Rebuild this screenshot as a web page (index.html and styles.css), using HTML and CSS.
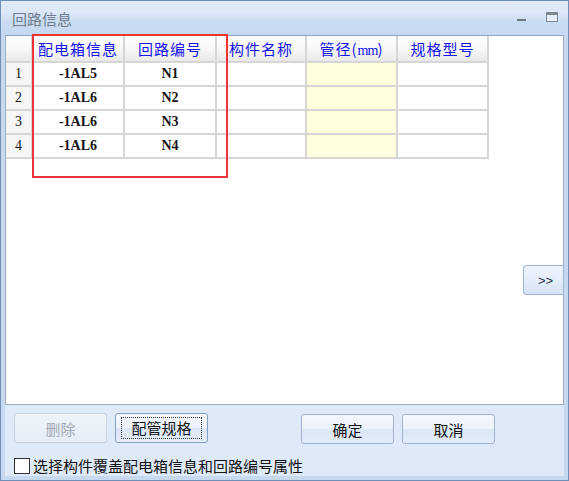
FILE: index.html
```html
<!DOCTYPE html>
<html>
<head>
<meta charset="utf-8">
<link rel="stylesheet" href="styles.css">
</head>
<body>
<div class="window">
  <div class="titlebar">
    <span class="title">回路信息</span>
    <div class="controls">
      <span class="min"></span>
      <span class="max"></span>
    </div>
  </div>
  <div class="client">
    <div class="grid-panel">
      <table class="grid">
        <colgroup>
          <col class="c-num"><col class="c1"><col class="c2"><col class="c3"><col class="c4"><col class="c5">
        </colgroup>
        <thead>
          <tr><th></th><th>配电箱信息</th><th>回路编号</th><th>构件名称</th><th>管径(<span class="mm">mm</span>)</th><th>规格型号</th></tr>
        </thead>
        <tbody>
          <tr><td class="num">1</td><td>-1AL5</td><td>N1</td><td></td><td class="yellow"></td><td></td></tr>
          <tr><td class="num">2</td><td>-1AL6</td><td>N2</td><td></td><td class="yellow"></td><td></td></tr>
          <tr><td class="num">3</td><td>-1AL6</td><td>N3</td><td></td><td class="yellow"></td><td></td></tr>
          <tr><td class="num">4</td><td>-1AL6</td><td>N4</td><td></td><td class="yellow"></td><td></td></tr>
        </tbody>
      </table>
      <div class="highlight"></div>
      <button class="expand">&gt;&gt;</button>
    </div>
    <div class="bottom">
      <div class="buttons">
        <button class="btn disabled">删除</button>
        <button class="btn focused"><span class="focus-ring">配管规格</span></button>
        <button class="btn ok">确定</button>
        <button class="btn">取消</button>
      </div>
      <label class="check-row"><span class="checkbox"></span><span>选择构件覆盖配电箱信息和回路编号属性</span></label>
    </div>
  </div>
</div>
</body>
</html>
```

FILE: styles.css
```css
body {
  margin: 0;
  font-family: "Noto Sans CJK SC", sans-serif;
}
.window {
  width: 569px;
  height: 481px;
  box-sizing: border-box;
  border: 1px solid #6f8fb8;
  background: #c6d9f1;
  display: flex;
  flex-direction: column;
}
.titlebar {
  height: 34px;
  flex: none;
  display: flex;
  align-items: center;
  padding-left: 11px;
  background: linear-gradient(#e2ecf8 0, #dbe7f7 35%, #c9dcf3 60%, #c5d9f2 100%);
}
.title {
  font-size: 15px;
  color: #6f7d8d;
}
.controls {
  margin-left: auto;
  display: flex;
  align-items: center;
  gap: 20px;
  padding-right: 10px;
}
.min {
  width: 9px;
  height: 2px;
  background: #6f7880;
  margin-top: 3px;
}
.max {
  width: 10px;
  height: 6px;
  border: 1px solid #7d8690;
  border-top: 3px solid #7d8690;
  background: #e6eef8;
  margin-top: -3px;
}
.client {
  flex: 1;
  margin: 0 4px 4px;
  display: flex;
  flex-direction: column;
}
.grid-panel {
  height: 370px;
  flex: none;
  box-sizing: border-box;
  border: 1px solid #a2adba;
  border-top-color: #8aa6cc;
  background: #ffffff;
  position: relative;
}
.grid {
  table-layout: fixed;
  width: 483px;
  border-collapse: separate;
  border-spacing: 0;
}
.c-num { width: 27px; }
.c1 { width: 92px; }
.c2 { width: 92px; }
.c3 { width: 90px; }
.c4 { width: 91px; }
.c5 { width: 91px; }
.grid th, .grid td {
  box-sizing: border-box;
  padding: 0;
  border-right: 2px solid #d6d6d6;
  border-bottom: 2px solid #d6d6d6;
  text-align: center;
}
.grid th {
  height: 27px;
  font-weight: normal;
  font-size: 15px;
  letter-spacing: 1px;
  color: #1414f0;
  background: linear-gradient(#ffffff 0, #f8f8f8 50%, #e9e9e9 100%);
}
.mm {
  font-family: "Liberation Serif", serif;
  font-size: 14px;
  letter-spacing: -1px;
}
.grid td {
  height: 24px;
  font-family: "Liberation Serif", serif;
  font-weight: bold;
  font-size: 14px;
  color: #151515;
}
.grid td.num {
  background: #f6f6f6;
  font-weight: normal;
  font-size: 14px;
}
.grid td.yellow {
  background: #ffffe0;
}
.highlight {
  position: absolute;
  left: 26px;
  top: -2px;
  width: 196px;
  height: 144px;
  box-sizing: border-box;
  border: 2px solid #ee3434;
}
.expand {
  position: absolute;
  right: -1px;
  top: 229px;
  width: 41px;
  height: 30px;
  box-sizing: border-box;
  border: 1px solid #9fb4d0;
  border-radius: 3px 0 0 3px;
  background: linear-gradient(#eef4fc 0, #e4edf9 50%, #d6e3f4 100%);
  font-family: "Liberation Sans", sans-serif;
  font-size: 13px;
  color: #1e3050;
  padding: 0 0 0 4px;
}
.bottom {
  flex: 1;
  background: #dfeaf8;
  padding: 8px 0 0 9px;
}
.buttons {
  display: flex;
  gap: 8px;
}
.btn {
  width: 93px;
  height: 30px;
  box-sizing: border-box;
  border: 1px solid #9fb3cf;
  border-radius: 3px;
  background: linear-gradient(#f5f8fd 0, #edf3fb 48%, #dce7f6 52%, #e4edf9 100%);
  font-family: "Noto Sans CJK SC", sans-serif;
  font-size: 15px;
  color: #111;
  padding: 0;
  display: flex;
  align-items: center;
  justify-content: center;
}
.btn.disabled {
  border-color: #c8d3e2;
  background: linear-gradient(#eef3fa 0, #e6eef8 100%);
  color: #a3aab4;
}
.btn.focused {
  border-color: #7f9fc8;
}
.focus-ring {
  border: 1px dotted #333;
  padding: 0 9px;
  line-height: 20px;
}
.btn.ok {
  margin-left: 85px;
  margin-top: 1px;
}
.btn.ok + .btn {
  margin-top: 1px;
}
.check-row {
  margin-top: 11px;
  display: flex;
  align-items: center;
  gap: 3px;
  font-size: 15px;
  color: #111;
}
.checkbox {
  width: 16px;
  height: 16px;
  box-sizing: border-box;
  border: 1px solid #333;
  background: #fff;
}
```
